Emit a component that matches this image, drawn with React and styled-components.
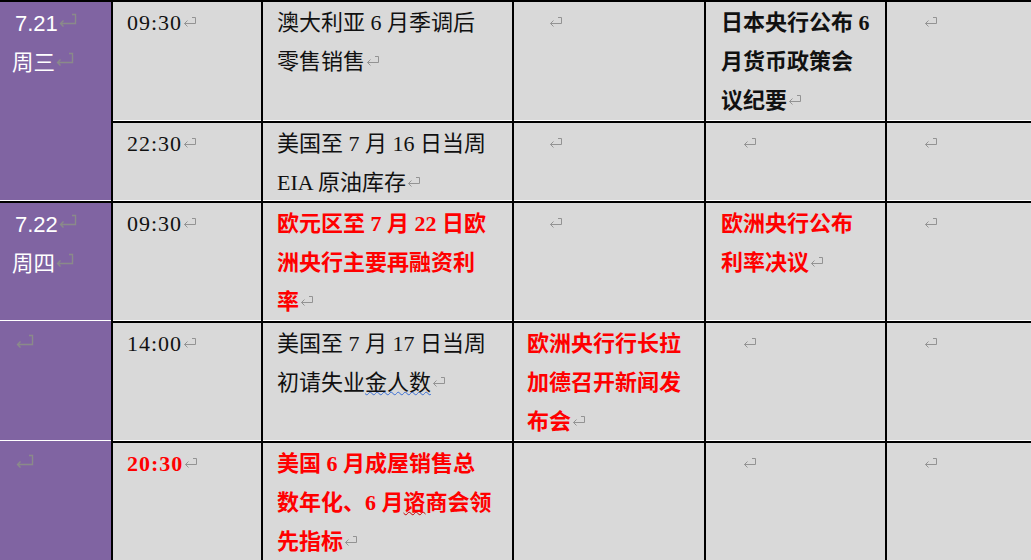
import React from 'react';
import styled, { createGlobalStyle } from 'styled-components';

const GlobalStyle = createGlobalStyle`
  *, *::before, *::after { box-sizing: border-box; }
  html, body {
    margin: 0;
    padding: 0;
    overflow: hidden;
    background: #fff;
  }
  body {
    font-family: "Liberation Serif", "Noto Sans CJK SC", serif;
  }
`;

const Table = styled.div`
  display: flex;
  flex-direction: column;
  gap: 2px;
  padding-top: 2px;
  width: 1031px;
  background: #000;
`;

const DayGroup = styled.div`
  display: grid;
  grid-template-columns: 111px 148px 249px 190px 179px 1fr;
  grid-template-rows: ${(p) => p.$rows};
  gap: 2px;
  background: linear-gradient(to right, #8064a2 111px, #000 111px);
`;

const DayCell = styled.div`
  grid-row: ${(p) => (p.$span ? '1 / -1' : 'auto')};
  background: #8064a2;
  border-bottom: 1px solid #fff;
  padding: 2px 0 0 12px;
  color: #fff;
  line-height: 39px;
`;

const DateText = styled.div`
  font-family: "Liberation Sans", "Noto Sans CJK SC", sans-serif;
  font-size: 22px;
  padding-left: 3px;
`;

const WeekText = styled.div`
  font-family: "Noto Sans CJK SC", sans-serif;
  font-size: 21.5px;
  margin-top: -2px;
`;

const Cell = styled.div`
  background: #d9d9d9;
  border-bottom: 1px solid #fff;
  padding: 1px 0 0 ${(p) => p.$pad}px;
  line-height: 39px;
  font-size: 22px;
  white-space: nowrap;
  color: ${(p) => (p.$tone === 'red' ? '#ff0000' : '#111')};
  font-weight: ${(p) => (p.$tone ? 700 : 400)};
`;

const Line = styled.div``;

const Time = styled.div`
  letter-spacing: 1px;
`;

const Indent = styled.div`
  padding-left: 21px;
`;

const Squiggle = styled.span`
  text-decoration: underline wavy ${(p) => p.$color};
  text-decoration-thickness: 1px;
  text-underline-offset: 1px;
  text-decoration-skip-ink: none;
`;

const Mark = styled.svg`
  display: inline-block;
  color: ${(p) => (p.$big ? '#8a8a8a' : '#939393')};
  vertical-align: ${(p) => (p.$big ? '4px' : '3px')};
  margin-left: 1px;
`;

// M = paragraph mark only, null = empty cell
const M = 'mark';

const schedule = [
  {
    date: '7.21',
    week: '周三',
    rows: '119px 78px',
    events: [
      {
        time: '09:30',
        cells: [
          { lines: ['澳大利亚 6 月季调后', '零售销售'] },
          M,
          { lines: ['日本央行公布 6', '月货币政策会', '议纪要'], tone: 'bold' },
          M,
        ],
      },
      {
        time: '22:30',
        cells: [{ lines: ['美国至 7 月 16 日当周', 'EIA 原油库存'] }, M, M, M],
      },
    ],
  },
  {
    date: '7.22',
    week: '周四',
    rows: '118px 118px 118px',
    events: [
      {
        time: '09:30',
        cells: [
          { lines: ['欧元区至 7 月 22 日欧', '洲央行主要再融资利', '率'], tone: 'red' },
          M,
          { lines: ['欧洲央行公布', '利率决议'], tone: 'red' },
          M,
        ],
      },
      {
        time: '14:00',
        cells: [
          { lines: ['美国至 7 月 17 日当周', <>初请失业<Squiggle $color="#3b6fd4">金人数</Squiggle></>] },
          { lines: ['欧洲央行行长拉', '加德召开新闻发', '布会'], tone: 'red' },
          M,
          M,
        ],
      },
      {
        time: '20:30',
        red: true,
        cells: [
          {
            lines: ['美国 6 月成屋销售总', <>数年化、6 月<Squiggle $color="#c00000">谘</Squiggle>商会领</>, '先指标'],
            tone: 'red',
          },
          null,
          M,
          M,
        ],
      },
    ],
  },
];

const pads = [14, 13, 15, 15];

const ReturnMark = ({ big }) => {
  const w = big ? 18 : 14;
  const h = big ? 14 : 11;
  return (
    <Mark $big={big} width={w} height={h} viewBox={`0 0 ${w} ${h}`}>
      <path
        d={`M${w - 5} 1.5H${w - 1.5}V${h - 3.5}H1.5M4.5 ${h - 6.5}L1.5 ${h - 3.5}L4.5 ${h - 0.5}`}
        fill="none"
        stroke="currentColor"
        strokeWidth={big ? 1.4 : 1}
      />
    </Mark>
  );
};

const EventCell = ({ cell, pad }) => {
  if (cell === null) return <Cell $pad={pad} />;
  if (cell === M)
    return (
      <Cell $pad={pad}>
        <Indent>
          <ReturnMark />
        </Indent>
      </Cell>
    );
  return (
    <Cell $pad={pad} $tone={cell.tone}>
      {cell.lines.map((line, i) => (
        <Line key={i}>
          {line}
          {i === cell.lines.length - 1 && <ReturnMark />}
        </Line>
      ))}
    </Cell>
  );
};

const App = () => {
  return (
    <>
      <GlobalStyle />
      <Table>
        {schedule.map((day) => (
          <DayGroup key={day.date} $rows={day.rows}>
            {day.events.map((ev, i) => (
              <React.Fragment key={ev.time + i}>
                {i === 0 ? (
                  <DayCell $span={day.events.length === 2}>
                    <DateText>
                      {day.date}
                      <ReturnMark big />
                    </DateText>
                    <WeekText>
                      {day.week}
                      <ReturnMark big />
                    </WeekText>
                  </DayCell>
                ) : day.events.length === 2 ? null : (
                  <DayCell>
                    <DateText>
                      <ReturnMark big />
                    </DateText>
                  </DayCell>
                )}
                <Cell $pad={14} $tone={ev.red ? 'red' : undefined}>
                  <Time>
                    {ev.time}
                    <ReturnMark />
                  </Time>
                </Cell>
                {ev.cells.map((c, j) => (
                  <EventCell key={j} cell={c} pad={pads[j]} />
                ))}
              </React.Fragment>
            ))}
          </DayGroup>
        ))}
      </Table>
    </>
  );
};

export default App;
